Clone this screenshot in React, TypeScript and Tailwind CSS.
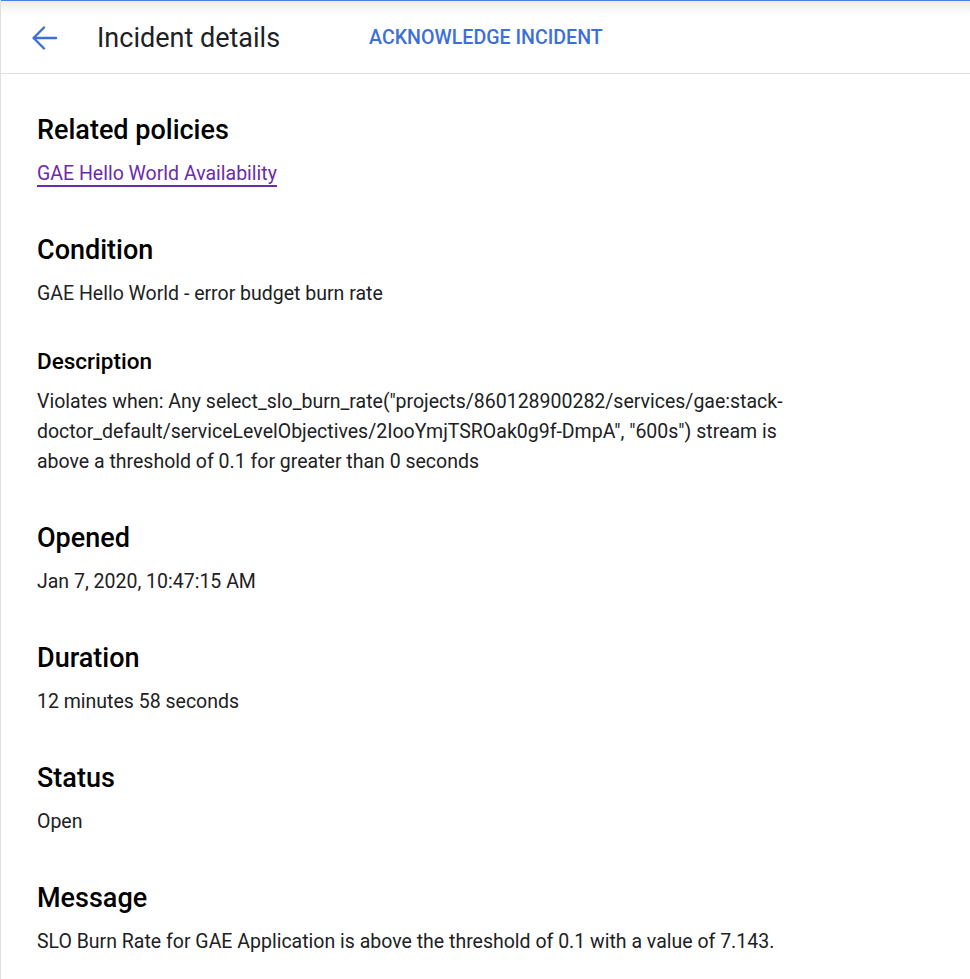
const details = [
  { title: 'Opened', body: 'Jan 7, 2020, 10:47:15 AM' },
  { title: 'Duration', body: '12 minutes 58 seconds' },
  { title: 'Status', body: 'Open' },
  { title: 'Message', body: 'SLO Burn Rate for GAE Application is above the threshold of 0.1 with a value of 7.143.' },
];

function BackArrow() {
  return (
    <svg width="26" height="26" viewBox="0 0 26 26" fill="none" stroke="currentColor" strokeWidth="2.4" strokeLinecap="round" strokeLinejoin="round">
      <path d="M24 13H2" />
      <path d="M12 2.5L1.6 13L12 23.5" />
    </svg>
  );
}

export default function App() {
  return (
    <div className="min-h-screen bg-white border-l border-[#e0e0e0] text-[#202124] font-['Roboto',sans-serif]">
      {/* header */}
      <header className="relative h-[74px] pt-[2px] border-b border-[#e0e0e0] flex items-center">
        <div className="absolute inset-x-0 top-0 h-[14px] bg-gradient-to-b from-[#ececec] to-white border-t border-[#4a7fe0]" />
        <button className="relative ml-[31px] text-[#3d6fd9]">
          <BackArrow />
        </button>
        <h1 className="relative ml-[39px] text-[27px] leading-[32px] text-[#202124]">Incident details</h1>
        <button className="relative ml-[89px] text-[19.6px] font-medium text-[#3d6fd9] uppercase">
          Acknowledge incident
        </button>
      </header>

      <main className="pl-[36px] pt-[40px] pb-10">
        <h2 className="text-[27px] leading-[32px] font-medium text-black">Related policies</h2>
        <a href="#" className="block mt-[16px] text-[19.5px] leading-[24px] text-[#6c2bab] underline underline-offset-[5px] decoration-[2px] w-fit">
          GAE Hello World Availability
        </a>

        <section className="mt-[48px]">
          <h2 className="text-[27px] leading-[32px] font-medium text-black">Condition</h2>
          <p className="mt-[16px] text-[19.5px] leading-[24px]">GAE Hello World - error budget burn rate</p>
        </section>

        <section className="mt-[41px]">
          <h3 className="text-[22.5px] leading-[28px] font-medium text-black">Description</h3>
          <p className="mt-[12px] text-[19.5px] leading-[30px] max-w-[760px]">
            Violates when: Any select_slo_burn_rate("projects/860128900282/services/gae:stack-doctor_default/serviceLevelObjectives/2IooYmjTSROak0g9f-DmpA", "600s") stream is above a threshold of 0.1 for greater than 0 seconds
          </p>
        </section>

        {details.map((d, i) => (
          <section key={d.title} className={i === 0 ? 'mt-[45px]' : 'mt-[48px]'}>
            <h2 className="text-[27px] leading-[32px] font-medium text-black">{d.title}</h2>
            <p className="mt-[16px] text-[19.5px] leading-[24px]">{d.body}</p>
          </section>
        ))}
      </main>
    </div>
  );
}
